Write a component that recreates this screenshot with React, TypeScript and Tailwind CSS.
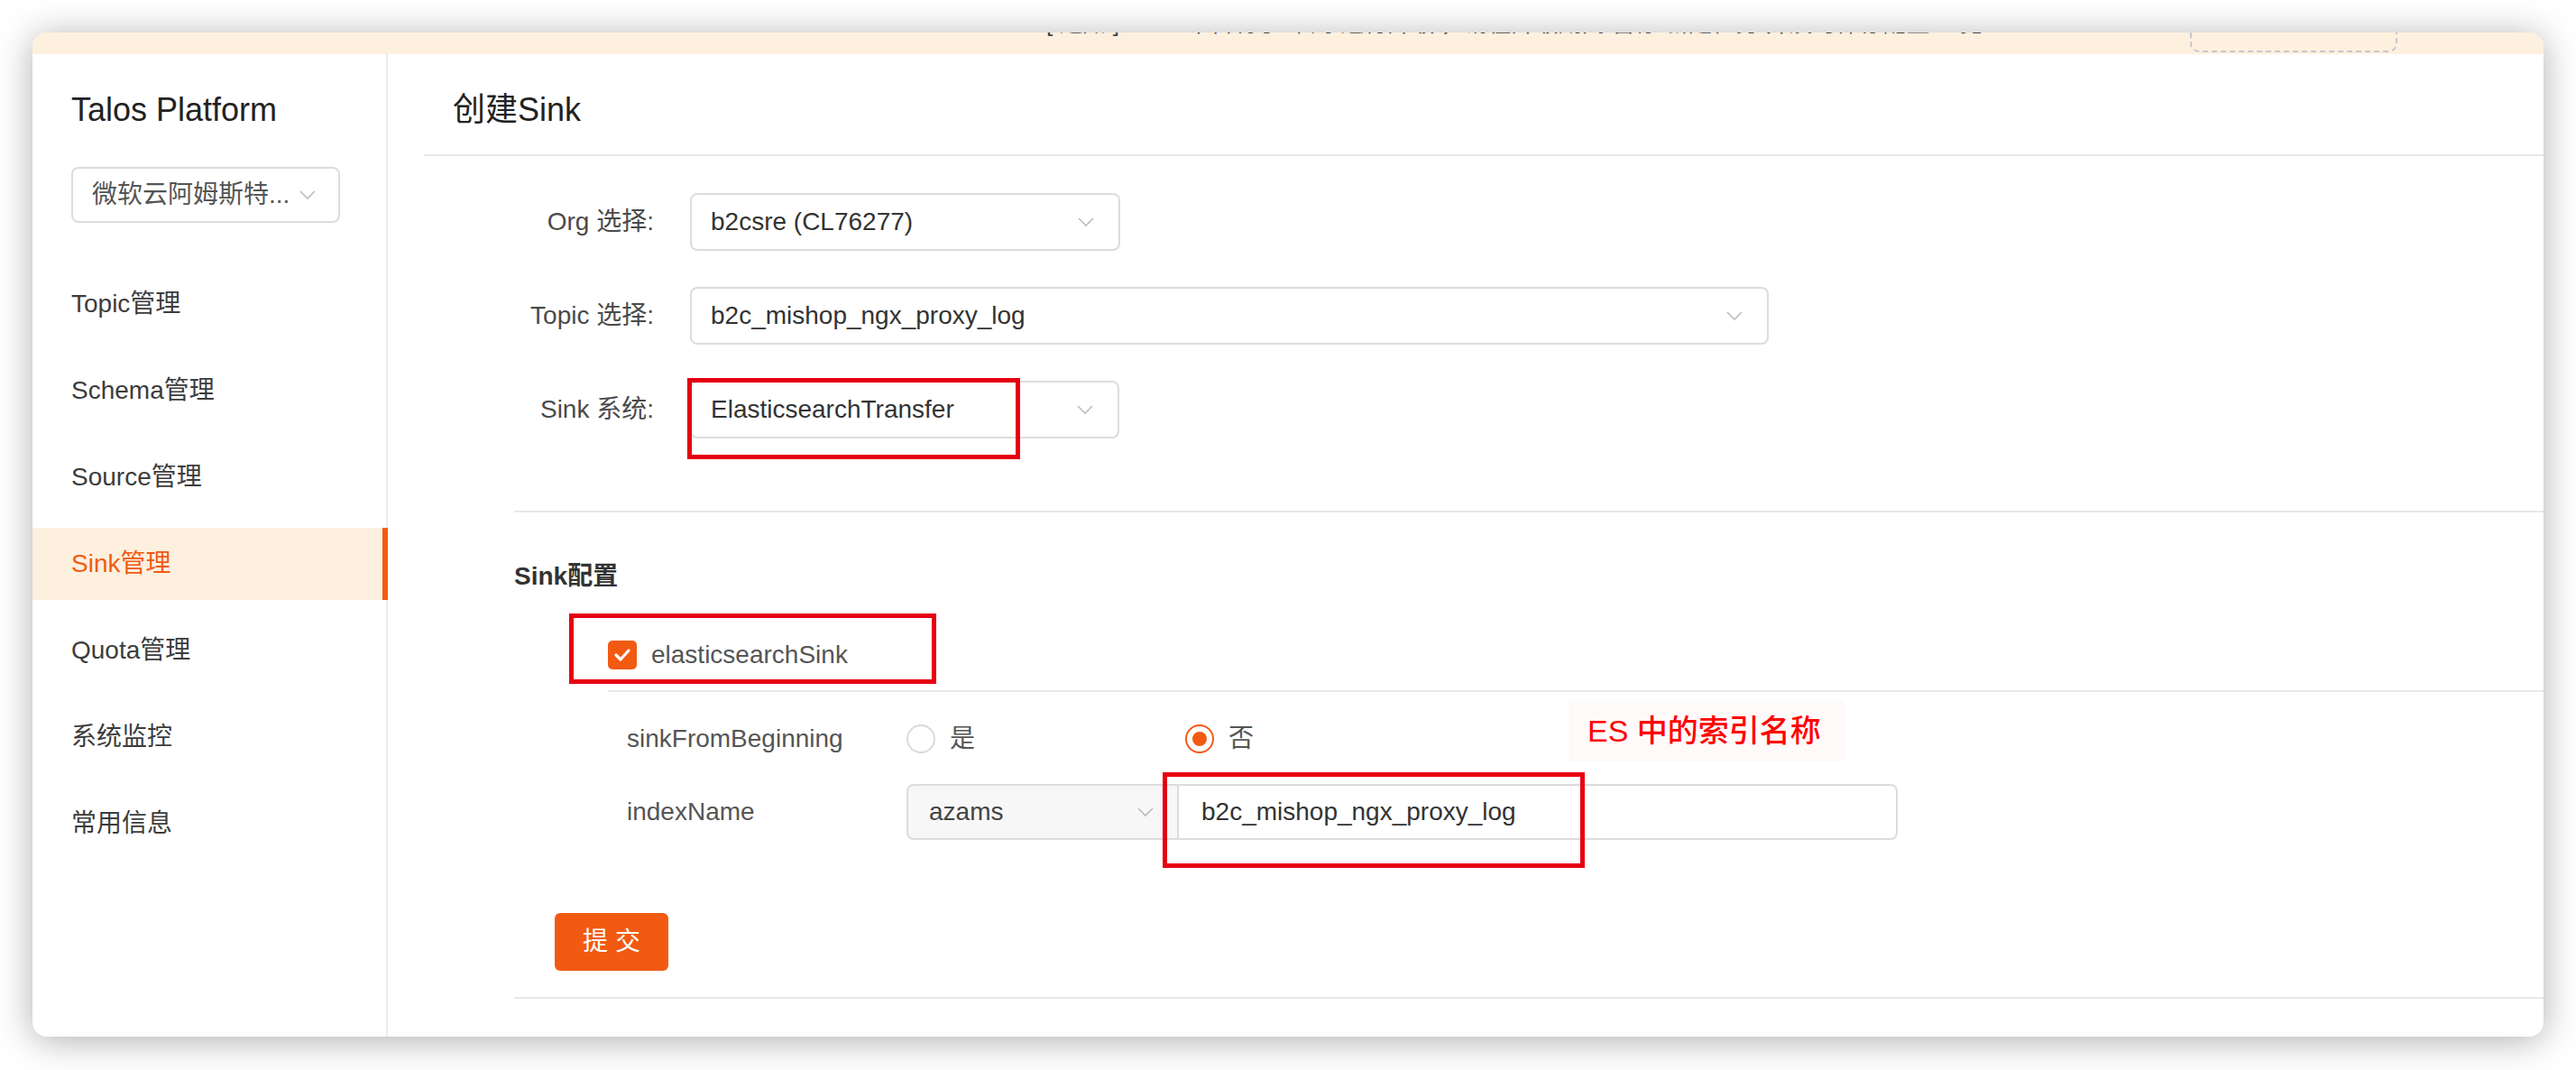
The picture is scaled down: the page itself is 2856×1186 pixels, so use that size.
import { ReactNode } from "react";

const font = {
  fontFamily: "'Liberation Sans', 'Noto Sans CJK SC', sans-serif",
};

const Chevron = () => (
  <svg width="20" height="12" viewBox="0 0 20 12" fill="none">
    <polyline points="2,2 10,10 18,2" stroke="#bdbdbd" strokeWidth="1.6" />
  </svg>
);

const Select = ({ value, width }: { value: string; width: string }) => (
  <div
    className={`${width} h-[64px] border-2 border-[#dcdcdc] rounded-[8px] flex items-center justify-between pl-[21px] pr-[26px] text-[28px] text-[#333]`}
  >
    <span>{value}</span>
    <Chevron />
  </div>
);

const Row = ({ label, children }: { label: string; children: ReactNode }) => (
  <div className="flex items-center h-[64px]">
    <div className="w-[295px] pr-[40px] text-right text-[28px] text-[#4a4a4a]">{label}</div>
    {children}
  </div>
);

const nav = ["Topic管理", "Schema管理", "Source管理", "Sink管理", "Quota管理", "系统监控", "常用信息"];

export default function App() {
  return (
    <div className="w-[2856px] h-[1186px] bg-white pt-[36px] pl-[36px]" style={font}>
      <div className="w-[2784px] h-[1113px] rounded-[16px] overflow-hidden bg-white shadow-[0_4px_40px_rgba(0,0,0,0.32)] flex flex-col">
        {/* notice banner, mostly scrolled out of view */}
        <div className="h-[24px] shrink-0 bg-[#fdf0df] flex overflow-hidden">
          <div className="ml-[1124px] -mt-[27px] text-[26px] leading-[34px] text-[#444] whitespace-nowrap">
            [ 通知 ] Talos 平台将于 本周 进行升级 ，请在升级期间 暂停 新建任务 并及时保存配置 一览
          </div>
          <div className="ml-auto mr-[162px] -mt-[40px] h-[62px] w-[230px] border-2 border-dashed border-[#c8c8c8] rounded-[10px] flex items-end justify-center pb-[21px] text-[24px] text-[#444]">
            不再显示此通知
          </div>
        </div>

        <div className="flex flex-1">
          {/* sidebar */}
          <div className="w-[394px] shrink-0 border-r-2 border-[#ececec] flex flex-col pt-[37px]">
            <div className="pl-[43px] text-[36px] leading-[50px] text-[#222]">Talos Platform</div>
            <div className="ml-[43px] mt-[38px] w-[298px] h-[62px] border-2 border-[#dcdcdc] rounded-[8px] flex items-center justify-between pl-[21px] pr-[24px] text-[28px] text-[#555]">
              <span>微软云阿姆斯特...</span>
              <Chevron />
            </div>
            <div className="mt-[50px] flex flex-col gap-[16px]">
              {nav.map((item) =>
                item === "Sink管理" ? (
                  <div
                    key={item}
                    className="h-[80px] -mr-[2px] flex items-center pl-[43px] text-[28px] text-[#f25a12] bg-[#fdf0df] border-r-[6px] border-[#f25a12]"
                  >
                    {item}
                  </div>
                ) : (
                  <div key={item} className="h-[80px] flex items-center pl-[43px] text-[28px] text-[#3c3c3c]">
                    {item}
                  </div>
                )
              )}
            </div>
          </div>

          {/* main */}
          <div className="flex-1 flex flex-col pl-[40px]">
            <div className="h-[113px] shrink-0 border-b-2 border-[#e8e8e8] pl-[32px] pt-[37px] text-[36px] leading-[50px] text-[#222]">
              创建Sink
            </div>

            <div className="pt-[41px] flex flex-col gap-[40px]">
              <Row label="Org 选择:">
                <Select value="b2csre (CL76277)" width="w-[477px]" />
              </Row>
              <Row label="Topic 选择:">
                <Select value="b2c_mishop_ngx_proxy_log" width="w-[1196px]" />
              </Row>
              <Row label="Sink 系统:">
                <div className="relative">
                  <Select value="ElasticsearchTransfer" width="w-[476px]" />
                  <div className="absolute -left-[3px] -top-[3px] w-[369px] h-[90px] border-[5px] border-[#e60012]" />
                </div>
              </Row>
            </div>

            <div className="relative ml-[100px] mt-[80px] border-t-2 border-[#e8e8e8]">
              <div className="pt-[51px] text-[28px] leading-[40px] font-semibold text-[#333]">Sink配置</div>

              <div className="mt-[43px] h-[48px] pl-[104px] flex items-center gap-[16px]">
                <div className="w-[32px] h-[32px] rounded-[5px] bg-[#f25a12] flex items-center justify-center">
                  <svg width="20" height="16" viewBox="0 0 20 16" fill="none">
                    <polyline points="3,8 8,13 17,3" stroke="white" strokeWidth="3.2" strokeLinecap="round" strokeLinejoin="round" />
                  </svg>
                </div>
                <span className="text-[28px] text-[#555]">elasticsearchSink</span>
              </div>

              <div className="ml-[104px] mt-[15px] border-t-2 border-[#e8e8e8]">
                <div className="mt-[20px] h-[64px] flex items-center">
                  <div className="w-[331px] pl-[21px] text-[28px] text-[#555]">sinkFromBeginning</div>
                  <div className="w-[309px] flex items-center gap-[16px]">
                    <div className="w-[32px] h-[32px] rounded-full border-2 border-[#d9d9d9]" />
                    <span className="text-[28px] text-[#555]">是</span>
                  </div>
                  <div className="flex items-center gap-[16px]">
                    <div className="w-[32px] h-[32px] rounded-full border-2 border-[#f25a12] flex items-center justify-center">
                      <div className="w-[16px] h-[16px] rounded-full bg-[#f25a12]" />
                    </div>
                    <span className="text-[28px] text-[#555]">否</span>
                  </div>
                </div>

                <div className="mt-[17px] h-[64px] flex items-center">
                  <div className="w-[331px] pl-[21px] text-[28px] text-[#555]">indexName</div>
                  <div className="flex h-[62px]">
                    <div className="w-[302px] bg-[#f7f7f7] border-2 border-[#dcdcdc] rounded-l-[8px] flex items-center justify-between pl-[23px] pr-[25px] text-[28px] text-[#444]">
                      <span>azams</span>
                      <Chevron />
                    </div>
                    <div className="w-[797px] border-2 border-l-0 border-[#dcdcdc] rounded-r-[8px] flex items-center pl-[25px] text-[28px] text-[#333]">
                      b2c_mishop_ngx_proxy_log
                    </div>
                  </div>
                </div>
              </div>

              <div className="ml-[45px] mt-[80px] w-[126px] h-[64px] rounded-[6px] bg-[#f25a12] flex items-center justify-center text-[28px] text-white">
                提 交
              </div>

              <div className="mt-[29px] border-t-2 border-[#e8e8e8]" />

              {/* annotations */}
              <div className="absolute left-[61px] top-[112px] w-[407px] h-[78px] border-[5px] border-[#e60012]" />
              <div className="absolute left-[719px] top-[288px] w-[468px] h-[106px] border-[5px] border-[#e60012]" />
              <div className="absolute left-[1169px] top-[209px] w-[307px] h-[67px] bg-[#fffafa] flex items-center pl-[21px] text-[34px] font-medium text-[#ff0000] whitespace-nowrap">
                ES 中的索引名称
              </div>
            </div>
          </div>
        </div>
      </div>
    </div>
  );
}
